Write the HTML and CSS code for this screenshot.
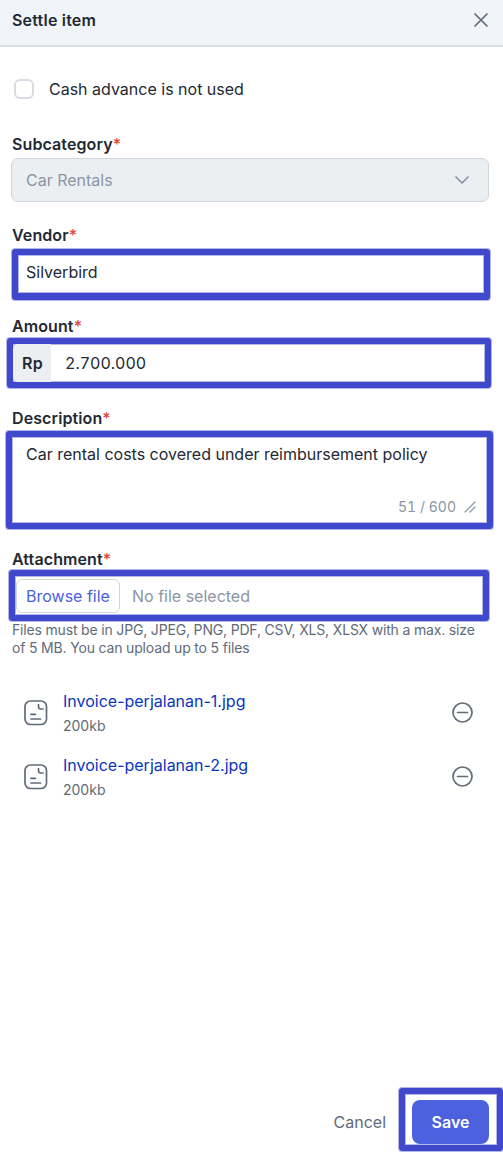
FILE: index.html
```
<!DOCTYPE html>
<html lang="en">
<head>
    <meta charset="UTF-8">
    <meta name="viewport" content="width=device-width, initial-scale=1.0">
    <link rel="stylesheet" href="styles.css">
    <title>Settle item</title>
</head>
<body>
    <div class="drawer">
        <header class="header">
            <h1>Settle item</h1>
            <svg class="close" width="14" height="14" viewBox="0 0 14 14"><path d="M1 1l12 12M13 1L1 13"/></svg>
        </header>

        <form class="form" action="">
            <div class="check">
                <span class="checkbox"></span>
                <span>Cash advance is not used</span>
            </div>

            <div class="field">
                <p class="label">Subcategory<span>*</span></p>
                <div class="select">
                    <span>Car Rentals</span>
                    <svg width="14" height="8" viewBox="0 0 14 8"><path d="M1 1l6 6 6-6"/></svg>
                </div>
            </div>

            <div class="field">
                <p class="label">Vendor<span>*</span></p>
                <div class="highlight vendor">Silverbird</div>
            </div>

            <div class="field field-amount">
                <p class="label">Amount<span>*</span></p>
                <div class="highlight amount">
                    <span class="currency">Rp</span>
                    <span class="number">2.700.000</span>
                </div>
            </div>

            <div class="field field-large">
                <p class="label">Description<span>*</span></p>
                <div class="highlight description">
                    <p class="text">Car rental costs covered under reimbursement policy</p>
                    <div class="counter">
                        <span>51 / 600</span>
                        <svg width="12" height="12" viewBox="0 0 12 12"><path d="M1 11L11 1M6 11l5-5"/></svg>
                    </div>
                </div>
            </div>

            <div class="field field-file">
                <p class="label">Attachment<span>*</span></p>
                <div class="highlight attachment">
                    <span class="browse">Browse file</span>
                    <span class="empty">No file selected</span>
                </div>
                <p class="help">Files must be in JPG, JPEG, PNG, PDF, CSV, XLS, XLSX with a max. size<br>of 5 MB. You can upload up to 5 files</p>
            </div>
        </form>

        <ul class="files">
            <li>
                <svg class="doc" width="24" height="26" viewBox="0 0 24 26"><rect x="1" y="1" width="21.5" height="23.5" rx="5.5"/><path d="M14.5 4.5v2.3a2.2 2.2 0 0 0 2.2 2.2H19M7 14.3h4.5M7 19h9.5"/></svg>
                <div class="info">
                    <p class="name">Invoice-perjalanan-1.jpg</p>
                    <p class="size">200kb</p>
                </div>
                <svg class="remove" width="22" height="22" viewBox="0 0 22 22"><circle cx="10.5" cy="10.5" r="9.5"/><path d="M5.500 10.500h10"/></svg>
            </li>
            <li>
                <svg class="doc" width="24" height="26" viewBox="0 0 24 26"><rect x="1" y="1" width="21.5" height="23.5" rx="5.5"/><path d="M14.5 4.5v2.3a2.2 2.2 0 0 0 2.2 2.2H19M7 14.3h4.5M7 19h9.5"/></svg>
                <div class="info">
                    <p class="name">Invoice-perjalanan-2.jpg</p>
                    <p class="size">200kb</p>
                </div>
                <svg class="remove" width="22" height="22" viewBox="0 0 22 22"><circle cx="10.5" cy="10.5" r="9.5"/><path d="M5.500 10.500h10"/></svg>
            </li>
        </ul>

        <footer class="footer">
            <span class="cancel">Cancel</span>
            <div class="highlight save-box">
                <span class="save">Save</span>
            </div>
        </footer>
    </div>
</body>
</html>
```
FILE: styles.css
```
* {
    padding: 0;
    margin: 0;
    box-sizing: border-box;
}
body {
    font-family: 'Inter', sans-serif;
    font-size: 16px;
    line-height: 24px;
    color: #232933;
    background-color: #fff;
}
svg {
    display: block;
    flex-shrink: 0;
    fill: none;
    stroke: #626b79;
    stroke-width: 1.7;
    stroke-linecap: round;
    stroke-linejoin: round;
}
.drawer {
    height: 1156px;
    display: flex;
    flex-direction: column;
    overflow: hidden;
    white-space: nowrap;
}
.header {
    height: 47px;
    padding: 0 15px 5px 12px;
    display: flex;
    justify-content: space-between;
    align-items: center;
    background-color: #f0f4f8;
    border-bottom: 2px solid #d9dee4;
}
h1 {
    font-size: 16px;
    font-weight: 600;
    letter-spacing: 0.2px;
}
.form {
    padding: 30px 14px 0 12px;
}
.check {
    height: 55px;
    display: flex;
    align-items: flex-start;
    gap: 15px;
    padding-left: 2px;
}
.checkbox {
    width: 20px;
    height: 20px;
    margin-top: 2px;
    border: 2px solid #d8dde4;
    border-radius: 6px;
}
.field {
    height: 91px;
}
.field-amount {
    height: 92px;
}
.field-large {
    height: 141px;
}
.field-file {
    height: 110px;
}
.label {
    height: 24px;
    font-weight: 600;
    letter-spacing: 0.1px;
}
.label span {
    font-weight: 500;
    color: #e0423c;
}
.select {
    height: 44px;
    margin: 2px 0 0 -1px;
    padding: 0 19px 0 14px;
    display: flex;
    justify-content: space-between;
    align-items: center;
    color: #8b95a5;
    background-color: #ebeff2;
    border: 1px solid #d0d6dd;
    border-radius: 7px;
}
.select svg {
    stroke: #8b95a5;
}
.highlight {
    border: 6px solid #4048cb;
    border-radius: 3px;
    box-shadow: 0 0 0 1px rgba(64, 72, 203, 0.4), inset 0 0 0 1px rgba(64, 72, 203, 0.4);
}
.vendor {
    height: 51px;
    margin: 2px -1px 0 0;
    padding: 5px 0 0 8px;
    border-bottom-width: 7px;
}
.amount {
    height: 50px;
    margin: 0 -2px 0 -5px;
    display: flex;
    align-items: stretch;
    line-height: 38px;
}
.currency {
    width: 38px;
    padding-left: 9px;
    font-weight: 600;
    letter-spacing: 0.2px;
    background-color: #ebeff2;
    border-radius: 5px 0 0 5px;
}
.number {
    margin-left: 14px;
    font-variant-numeric: tabular-nums;
}
.description {
    height: 98px;
    margin: 1px -4px 0 -6px;
    padding: 5px 11px 4px 14px;
    display: flex;
    flex-direction: column;
    justify-content: space-between;
}
.counter {
    display: flex;
    justify-content: flex-end;
    align-items: center;
    gap: 8px;
    font-size: 14px;
    font-variant-numeric: tabular-nums;
    color: #8b95a5;
}
.counter svg {
    stroke: #8b95a5;
    stroke-width: 1.2;
}
.attachment {
    height: 51px;
    margin: -1px 0 0 -3px;
    padding: 1px 0 0 1px;
    display: flex;
    align-items: center;
}
.browse {
    width: 104px;
    height: 34px;
    padding-left: 9px;
    line-height: 32px;
    color: #4a5fdf;
    border: 1px solid #d0d6dd;
    border-radius: 6px;
}
.empty {
    margin-left: 12px;
    color: #8b95a5;
}
.help {
    font-size: 14px;
    line-height: 18px;
    letter-spacing: -0.17px;
    color: #626b79;
}
.files {
    margin-top: 32px;
    padding: 0 29px 0 24px;
    list-style: none;
}
.files li {
    height: 64px;
    display: flex;
    align-items: flex-start;
}
.doc {
    margin-top: 11px;
}
.info {
    flex: 1;
    margin-left: 15px;
}
.name {
    color: #0b35bd;
}
.size {
    padding-top: 1px;
    font-size: 14px;
    color: #626b79;
}
.remove {
    margin-top: 13px;
}
.footer {
    margin-top: auto;
    padding-bottom: 5px;
    display: flex;
    justify-content: flex-end;
    align-items: center;
}
.cancel {
    margin-right: 13px;
    color: #626b79;
    padding-top: 4px;
}
.save-box {
    width: 104px;
    height: 63px;
    padding: 6px 8px 1px 7px;
}
.save {
    display: block;
    height: 44px;
    line-height: 44px;
    text-align: center;
    font-weight: 600;
    color: #fff;
    background-color: #4b61dd;
    border-radius: 8px;
}
```
